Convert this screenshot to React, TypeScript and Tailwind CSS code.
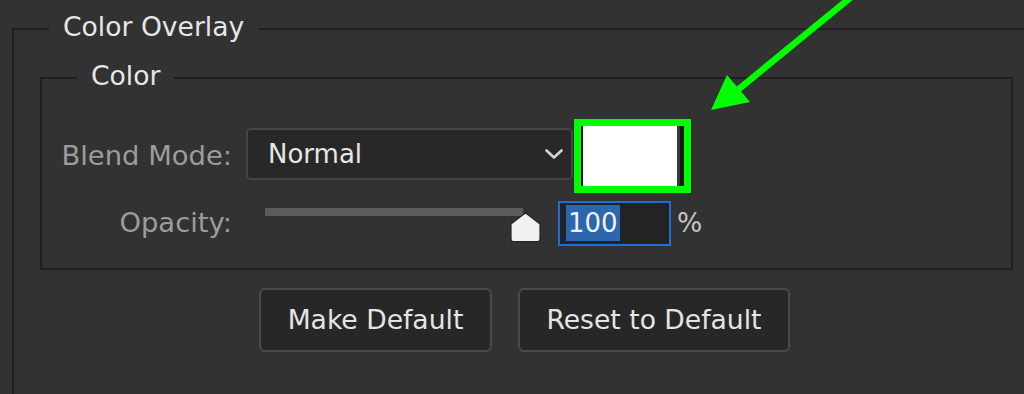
import React from "react";

const Chevron = () => (
  <svg width="20" height="12" viewBox="0 0 20 12" fill="none">
    <path
      d="M2.5 2.5 L10 9.5 L17.5 2.5"
      stroke="#d2d2d2"
      strokeWidth="2.6"
      strokeLinecap="round"
      strokeLinejoin="round"
    />
  </svg>
);

const Thumb = () => (
  <svg width="33" height="32" viewBox="0 0 33 32" className="absolute left-[244px] top-[10px]">
    <path
      d="M15 3 Q16.5 1.8 18 3 L31 13 L31 28 Q31 30.5 28.5 30.5 L4.5 30.5 Q2 30.5 2 28 L2 13 Z"
      fill="#f1f1f1"
      stroke="#262626"
      strokeWidth="1.2"
      strokeLinejoin="round"
    />
  </svg>
);

const Arrow = () => (
  <svg
    className="pointer-events-none absolute inset-0"
    width="1024"
    height="394"
    viewBox="0 0 1024 394"
  >
    <line x1="872" y1="-20" x2="734" y2="93" stroke="#00ff00" strokeWidth="6.5" />
    <polygon points="711,110 727,75 750,102" fill="#00ff00" />
  </svg>
);

export default function App() {
  return (
    <div className="relative h-[394px] w-[1024px] overflow-hidden bg-[#323232] font-['DejaVu_Sans',sans-serif] text-[26.6px] leading-[30px]">
      <fieldset className="ml-3 mt-3 h-[420px] w-[1040px] border-2 border-[#1f1f1f]">
        <legend className="ml-[35px] px-[14px] pb-[3px] text-[#e6e6e6]">Color Overlay</legend>

        {/* inner group */}
        <fieldset className="ml-[26px] mt-4 w-[973px] border-2 border-[#1f1f1f] pb-[22px] pt-[25px]">
          <legend className="ml-[35px] px-[14px] pb-[3px] text-[#e6e6e6]">Color</legend>

          <div className="flex h-[74px] items-start">
            <span className="mt-[22px] w-[190px] text-right text-[27.4px] text-[#9c9c9c]">Blend Mode:</span>
            <div className="ml-[14px] mt-[9px] flex h-[52px] w-[327px] items-center justify-between rounded-[5px] border-2 border-[#454545] bg-[#282828] pl-[20px] pr-[7px]">
              <span className="text-[26px] text-[#e6e6e6]">Normal</span>
              <Chevron />
            </div>
            <div className="ml-[1px] flex h-[74px] w-[117px] border-[7px] border-[#00ff00]">
              <div className="w-[2px] bg-[#111111]" />
              <div className="flex-1 bg-white" />
              <div className="w-[3px] bg-[#3a3a3a]" />
              <div className="w-[4px] bg-[#161616]" />
            </div>
          </div>

          <div className="mt-[8px] flex h-[45px] items-start">
            <span className="mt-[7px] w-[190px] text-right text-[27.4px] text-[#9c9c9c]">Opacity:</span>
            <div className="relative ml-[33px] h-[45px] w-[277px]">
              <div className="mt-[7px] h-[8px] w-[258px] bg-[#5b5b5b]" />
              <Thumb />
            </div>
            <div className="ml-[16px] h-[45px] w-[113px] border-2 border-[#1c6fd9] bg-[#232323] pl-[6px] pt-[2px]">
              <span className="inline-block h-[36px] bg-[#2b67ad] px-[2px] text-[26px] leading-[36px] text-[#f2f2f2]">100</span>
            </div>
            <span className="ml-[6px] mt-[7px] text-[#c4c4c4]">%</span>
          </div>
        </fieldset>

        <div className="ml-[245px] mt-[18px] flex gap-[26px]">
          <button className="h-[64px] w-[233px] rounded-[6px] border-2 border-[#4a4a4a] bg-[#272727] text-[#e4e4e4]">
            Make Default
          </button>
          <button className="h-[64px] w-[272px] rounded-[6px] border-2 border-[#4a4a4a] bg-[#272727] text-[#e4e4e4]">
            Reset to Default
          </button>
        </div>
      </fieldset>

      <Arrow />
    </div>
  );
}
